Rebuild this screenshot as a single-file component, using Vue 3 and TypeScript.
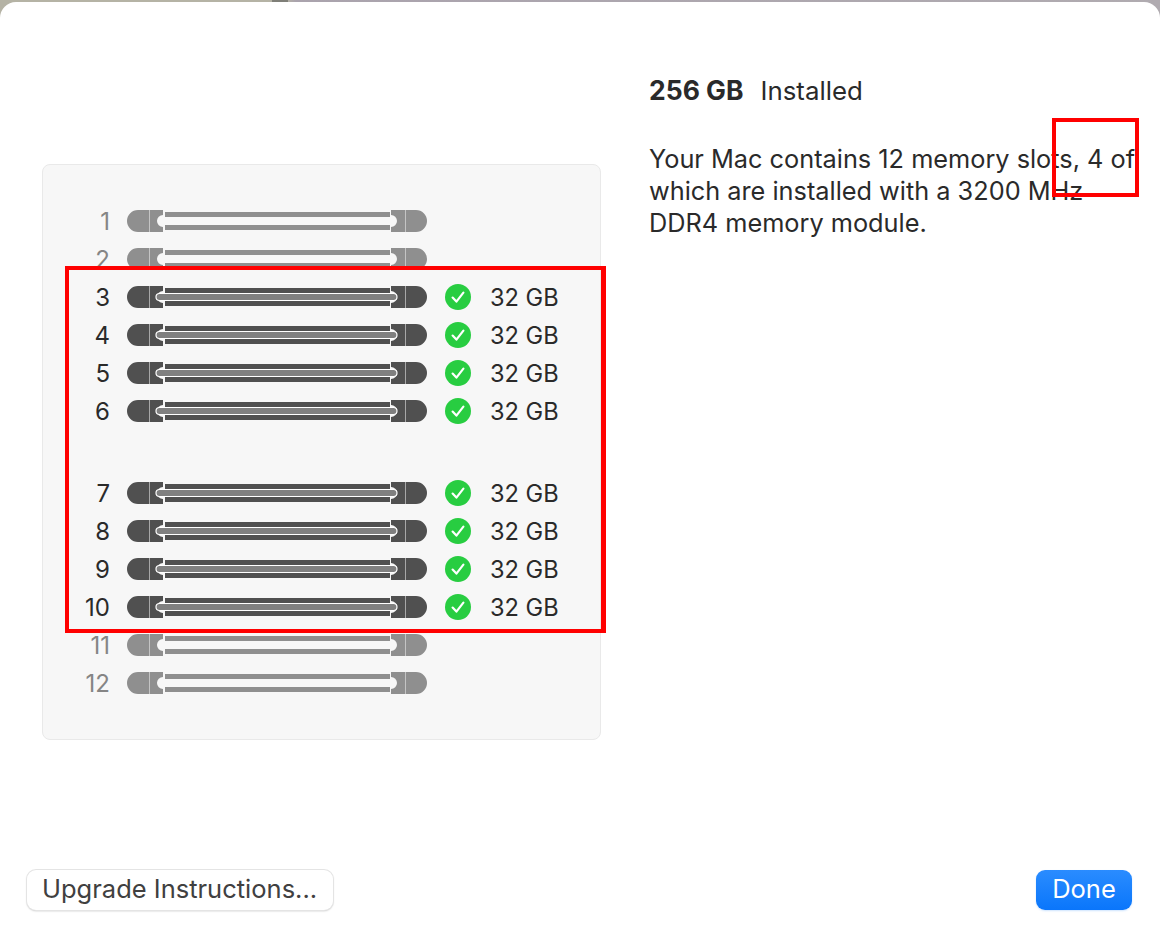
<template>
  <div class="desktop">
    <div class="sheet">
      <div class="main">
        <div class="panel">
          <div class="slot-list">
            <div v-for="slot in slots" :key="slot.id" class="slot" :class="{ filled: slot.size, 'group-start': slot.id === 7 }">
              <span class="num">{{ slot.id }}</span>
              <svg class="module" width="300" height="22" viewBox="0 0 300 22">
                <path class="cap" d="M11 0H36V5A6 6 0 0 0 36 17V22H11A11 11 0 0 1 11 0Z" />
                <path class="cap" d="M264 0H289A11 11 0 0 1 289 22H264V17A6 6 0 0 0 264 5Z" />
                <path class="seam" d="M22.5 0V22M278.5 0V22" />
                <rect class="rail" x="38" y="2" width="225" height="5" />
                <rect class="rail" x="38" y="15" width="225" height="5" />
                <rect v-if="slot.size" class="stick" x="29" y="7.5" width="241" height="7" rx="3.5" />
              </svg>
              <template v-if="slot.size">
                <svg class="ok" width="26" height="26" viewBox="0 0 26 26">
                  <circle cx="13" cy="13" r="13" fill="#28cd41" />
                  <path d="M7.6 13.6L11.4 17.6L18.4 8.6" fill="none" stroke="#fff" stroke-width="2.2" stroke-linecap="round" stroke-linejoin="round" />
                </svg>
                <span class="size">{{ slot.size }}</span>
              </template>
            </div>
          </div>
        </div>
        <div class="info">
          <p class="total"><b>256 GB</b><span>Installed</span></p>
          <p class="desc">Your Mac contains 12 memory slots, 4 of which are installed with a 3200 MHz DDR4 memory module.</p>
        </div>
      </div>
      <div class="footer">
        <button class="btn">Upgrade Instructions...</button>
        <button class="btn primary">Done</button>
      </div>
      <!-- annotation boxes from the screenshot -->
      <div class="mark mark-slots"></div>
      <div class="mark mark-text"></div>
    </div>
  </div>
</template>

<script setup lang="ts">
interface Slot {
  id: number
  size?: string
}

const installed = [3, 4, 5, 6, 7, 8, 9, 10]

const slots: Slot[] = Array.from({ length: 12 }, (_, i) => ({
  id: i + 1,
  size: installed.includes(i + 1) ? '32 GB' : undefined,
}))
</script>

<style>
html, body { margin: 0; background: #fff; }
</style>

<style scoped>
.desktop {
  width: 1160px;
  height: 936px;
  overflow: hidden;
  background: linear-gradient(90deg, #b5b3a5 0, #b5b3a5 272px, #7f7f78 272px, #7f7f78 288px, #b3b0a6 288px, #aaa3ad 296px, #b0abb0 100%);
  font-family: Inter, "Noto Sans", "Liberation Sans", sans-serif;
  color: #2a2a2a;
}
.sheet {
  position: relative;
  box-sizing: border-box;
  height: 934px;
  margin-top: 2px;
  padding: 0 28px 24px 26px;
  background: #fff;
  border-radius: 16px 16px 0 0;
  display: flex;
  flex-direction: column;
  justify-content: space-between;
}
.main {
  display: flex;
  align-items: flex-start;
  padding-left: 16px;
  gap: 48px;
}
.panel {
  flex: none;
  box-sizing: border-box;
  width: 559px;
  height: 576px;
  margin-top: 162px;
  padding-top: 45px;
  background: #f7f7f7;
  border: 1px solid #e9e9e9;
  border-radius: 8px;
}
.slot-list {
  display: flex;
  flex-direction: column;
  gap: 16px;
}
.slot {
  display: flex;
  align-items: center;
  height: 22px;
}
.slot.group-start { margin-top: 44px; }
.num {
  width: 67px;
  margin-top: 2px;
  margin-right: 17px;
  text-align: right;
  font-size: 24px;
  line-height: 22px;
  color: #858585;
}
.filled .num { color: #2a2a2a; }
.module { flex: none; }
.cap, .rail { fill: #8f8f8f; }
.seam { stroke: #c4c4c4; stroke-width: 1; }
.filled .cap, .filled .rail { fill: #505050; }
.filled .seam { stroke: #a8a8a8; }
.stick { fill: #808080; stroke: #fff; stroke-width: 1.2; }
.ok { flex: none; margin-left: 18px; }
.size {
  margin-top: 2px;
  margin-left: 19px;
  font-size: 23.6px;
  line-height: 22px;
  white-space: nowrap;
}
.info {
  flex: none;
  width: 490px;
  padding-top: 72px;
  font-size: 25.3px;
  line-height: 32px;
}
.total { margin: 0 0 36px; font-size: 25.8px; }
.total b { font-weight: 700; font-size: 26.5px; margin-right: 17px; }
.desc { margin: 0; }
.footer {
  display: flex;
  justify-content: space-between;
  align-items: center;
  padding-bottom: 2px;
}
.btn {
  box-sizing: border-box;
  height: 40px;
  margin-left: 1px;
  padding: 0 16px 2px 15px;
  border: none;
  border-radius: 9px;
  background: #fff;
  color: #404040;
  font: 25.5px/38px Inter, "Noto Sans", "Liberation Sans", sans-serif;
  box-shadow: 0 0 0 1px #e4e4e4, 0 1px 2px rgba(0, 0, 0, .28);
}
.btn.primary {
  width: 96px;
  margin-left: 0;
  padding: 0 0 2px;
  color: #fff;
  background: linear-gradient(#2a8cff, #0a76fb);
  box-shadow: 0 1px 2px rgba(10, 118, 251, .2);
}
.mark {
  position: absolute;
  box-sizing: border-box;
  border: 4px solid #ff0000;
}
.mark-slots { left: 65px; top: 264px; width: 541px; height: 367px; border-right-width: 5px; }
.mark-text { left: 1052px; top: 116px; width: 87px; height: 79px; }
</style>
